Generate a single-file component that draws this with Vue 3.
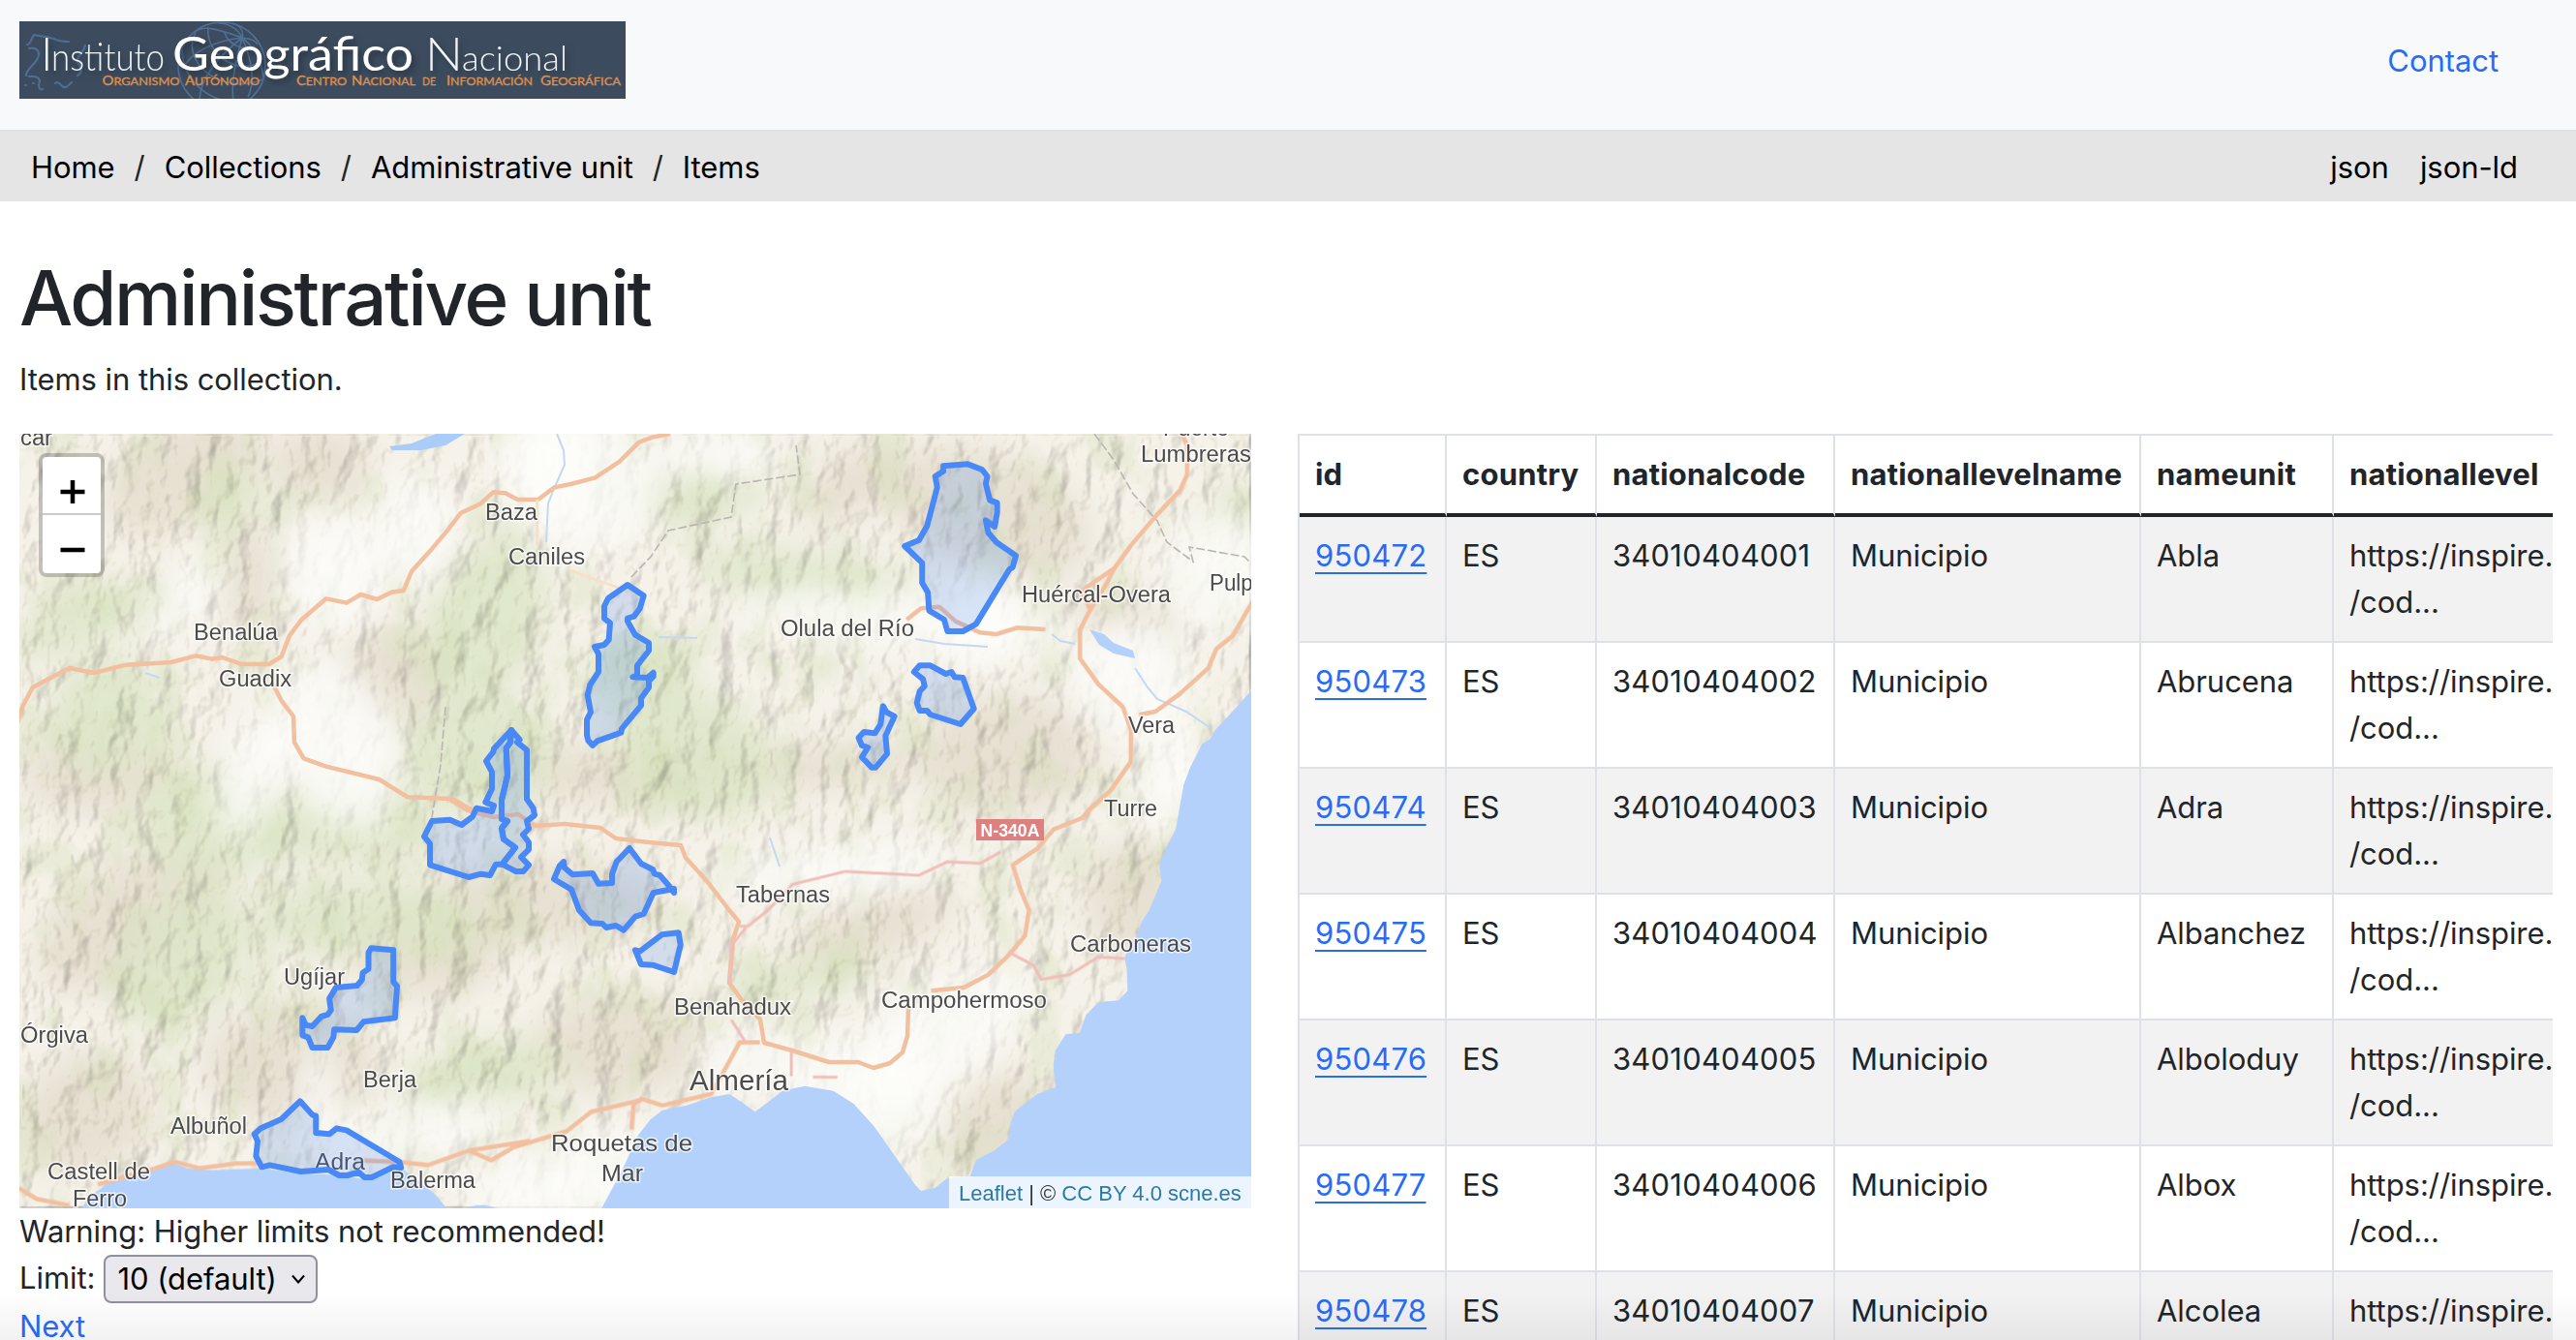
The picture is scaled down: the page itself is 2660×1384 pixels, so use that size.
<script setup>
const crumbs = ['Home', 'Collections', 'Administrative unit', 'Items']
const columns = ['id', 'country', 'nationalcode', 'nationallevelname', 'nameunit', 'nationallevel']
const names = ['Abla', 'Abrucena', 'Adra', 'Albanchez', 'Alboloduy', 'Albox', 'Alcolea']
const rows = names.map((name, i) => ({ id: 950472 + i, code: `3401040400${i + 1}`, name }))

// town labels: text, left edge, baseline, width, font size
const towns = [
  ['car', 21, 460, 33, 23],
  ['Baza', 501, 537, 54, 23],
  ['Caniles', 525, 583, 79, 23],
  ['Benalúa', 200, 661, 87, 23],
  ['Guadix', 226, 709, 75, 23],
  ['Puerto', 1201, 450, 68, 23],
  ['Lumbreras', 1178, 477, 114, 23],
  ['Huércal-Overa', 1055, 622, 154, 23],
  ['Pulpí', 1249, 610, 51, 23],
  ['Olula del Río', 806, 657, 138, 23],
  ['Vera', 1165, 757, 48, 23],
  ['Turre', 1140, 843, 55, 23],
  ['Ugíjar', 293, 1017, 63, 23],
  ['Órgiva', 21, 1077, 70, 23],
  ['Berja', 375, 1123, 55, 23],
  ['Albuñol', 176, 1171, 79, 23],
  ['Adra', 325, 1208, 52, 23],
  ['Castell de', 49, 1218, 106, 23],
  ['Ferro', 75, 1246, 56, 23],
  ['Balerma', 403, 1227, 88, 23],
  ['Roquetas de', 569, 1189, 146, 24],
  ['Mar', 621, 1220, 43, 24],
  ['Tabernas', 760, 932, 97, 23],
  ['Carboneras', 1105, 983, 125, 23],
  ['Benahadux', 696, 1048, 121, 23],
  ['Campohermoso', 910, 1041, 171, 23],
  ['Almería', 712, 1126, 102, 29]
]

// soft terrain patches: cx, cy, rx, ry, rotation
const greens = [
  [110, 740, 60, 60, 0], [90, 640, 90, 26, -20], [210, 850, 70, 60, 20], [500, 640, 60, 90, 20],
  [490, 780, 80, 60, 0], [830, 600, 110, 30, 10], [720, 510, 80, 24, -5], [720, 780, 90, 60, 20],
  [330, 850, 120, 40, 0], [190, 990, 80, 60, -50], [380, 950, 120, 40, 0], [830, 1010, 80, 20, -10],
  [500, 1110, 90, 34, -10], [240, 510, 40, 24, 0], [1110, 885, 24, 12, 0], [1270, 530, 50, 18, -45], [660, 700, 60, 40, 0]
]
const browns = [
  [190, 490, 90, 50, -30], [330, 480, 50, 40, 0], [260, 600, 26, 60, 0], [810, 795, 160, 22, -4],
  [140, 950, 110, 60, -30], [90, 1150, 70, 60, -30], [1020, 530, 110, 60, 20], [1180, 930, 60, 60, -40],
  [1040, 1170, 60, 60, -50], [620, 800, 120, 30, 0], [560, 930, 130, 40, 0], [900, 960, 90, 30, -20],
  [100, 800, 80, 40, 0], [400, 700, 50, 50, 0], [1160, 640, 60, 24, 10], [1040, 780, 90, 60, 0],
  [640, 1080, 90, 50, 0], [300, 1100, 90, 60, 0], [880, 500, 60, 30, -30], [780, 1100, 40, 30, 0], [440, 980, 80, 50, 0]
]
const plains = [
  [345, 590, 50, 60, 0], [350, 770, 60, 90, -20], [260, 800, 30, 70, 20], [600, 500, 80, 70, 20],
  [560, 470, 40, 60, 0], [190, 620, 20, 50, 30], [970, 1070, 100, 50, -35], [900, 1130, 70, 60, 20],
  [860, 900, 120, 24, -5], [1260, 590, 60, 60, 0], [1170, 700, 60, 60, 0], [610, 1220, 130, 50, -10],
  [430, 1170, 100, 24, -10], [940, 640, 180, 26, 5], [780, 1100, 60, 40, 0], [1210, 800, 30, 60, 20],
  [740, 470, 60, 24, 0], [1010, 640, 50, 50, 0], [330, 1140, 20, 60, 0], [430, 550, 40, 60, 0]
]
</script>

<template>
  <div class="page">
    <header class="top">
      <svg class="logo" viewBox="20 22 626 80" width="626" height="80">
        <rect x="20" y="22" width="626" height="80" fill="#3c4c5e" />
        <g fill="none" stroke="#4f7096" stroke-width="1.6">
          <ellipse cx="229" cy="68" rx="45" ry="45" />
          <path d="M250 39C225 30 210 26 203 32M250 39C222 42 196 54 188 72M250 39C228 56 206 80 206 104M250 39C244 62 238 84 241 104M250 39C260 62 264 84 256 100M250 39C262 48 270 62 272 80M250 39C246 30 236 24 226 24M250 39C252 32 248 26 240 24M250 39C260 40 264 42 266 46" />
          <path d="M232 33C234 44 250 54 263 48M215 28C212 56 244 78 270 64M202 34C186 62 226 100 272 82M188 52C188 76 206 98 232 104" />
        </g>
        <g fill="none" stroke="#4d6d92" stroke-width="2.2" stroke-linecap="round">
          <path d="M28 46C32 46 32 40 35 36C44 38 52 38 58 41C63 43 66 43 71 43" />
          <path d="M30 50C38 48 43 54 38 62C33 69 27 72 27 78M30 79C38 78 43 81 40 87C40 92 42 93 44 92M57 86C62 82 63 92 68 90C70 89 72 87 74 85M88 47C86 56 78 58 80 64C84 70 86 74 80 78M34 86L35 86M26 88L27 88" />
        </g>
        <g class="logo-shadow" fill="#fff" font-family="Lato, sans-serif">
          <g font-weight="300" fill="#f0f3f6">
            <text x="42" y="73.3" font-size="48">I</text>
            <text x="53" y="73.3" font-size="39" textLength="117" lengthAdjust="spacingAndGlyphs">nstituto</text>
            <text x="439" y="73.3" font-size="48" textLength="39" lengthAdjust="spacingAndGlyphs">N</text>
            <text x="477" y="73.3" font-size="36" textLength="109" lengthAdjust="spacingAndGlyphs">acional</text>
          </g>
          <text x="178" y="73.3" font-size="49" textLength="249" lengthAdjust="spacingAndGlyphs">Geográfico</text>
        </g>
        <g class="agency">
          <text x="105.500" y="88.300" textLength="80" lengthAdjust="spacingAndGlyphs">O<tspan>RGANISMO</tspan></text>
          <text x="191" y="88.300" textLength="77" lengthAdjust="spacingAndGlyphs">A<tspan>UTÓNOMO</tspan></text>
          <text x="306" y="88.300" textLength="52" lengthAdjust="spacingAndGlyphs">C<tspan>ENTRO</tspan></text>
          <text x="363" y="88.300" textLength="66" lengthAdjust="spacingAndGlyphs">N<tspan>ACIONAL</tspan></text>
          <text x="436" y="88.300" textLength="14" lengthAdjust="spacingAndGlyphs"><tspan>DE</tspan></text>
          <text x="461" y="88.300" textLength="89" lengthAdjust="spacingAndGlyphs">I<tspan>NFORMACIÓN</tspan></text>
          <text x="558" y="88.300" textLength="83" lengthAdjust="spacingAndGlyphs">G<tspan>EOGRÁFICA</tspan></text>
        </g>
      </svg>
      <a class="contact">Contact</a>
    </header>

    <nav class="crumbs">
      <div class="trail">
        <template v-for="(c, i) in crumbs" :key="c">
          <span v-if="i" class="slash">/</span>
          <a>{{ c }}</a>
        </template>
      </div>
      <div class="formats"><a>json</a><a>json-ld</a></div>
    </nav>

    <main>
      <h1>Administrative unit</h1>
      <p class="lead">Items in this collection.</p>

      <div class="cols">
        <section class="left">
          <div class="map">
            <svg viewBox="20 448 1272 800" width="1272" height="800">
              <defs>
                <filter id="soft" x="-50%" y="-50%" width="200%" height="200%"><feGaussianBlur stdDeviation="16" /></filter>
                <filter id="fine" x="-5%" y="-5%" width="110%" height="110%"><feGaussianBlur stdDeviation="0.7" /></filter>
                <filter id="relief" x="0" y="0" width="100%" height="100%" color-interpolation-filters="sRGB">
                  <feTurbulence type="fractalNoise" baseFrequency="0.04 0.022" numOctaves="4" seed="11" result="n" />
                  <feColorMatrix in="n" type="matrix" values="0 0 0 0 0  0 0 0 0 0  0 0 0 0 0  1 0 0 0 0" />
                  <feGaussianBlur stdDeviation="1" />
                  <feDiffuseLighting surfaceScale="8" diffuseConstant="1.18" lighting-color="#fffaf0">
                    <feDistantLight azimuth="215" elevation="60" />
                  </feDiffuseLighting>
                </filter>
                <filter id="mottle" x="0" y="0" width="100%" height="100%" color-interpolation-filters="sRGB">
                  <feTurbulence type="fractalNoise" baseFrequency="0.02 0.014" numOctaves="4" seed="4" />
                  <feColorMatrix type="matrix" values="0 0 0 0 0.80  0 0 0 0 0.86  0 0 0 0 0.68  0 5 0 0 -2.5" />
                </filter>
              </defs>

              <rect x="20" y="448" width="1272" height="800" fill="#f5f2ea" />
              <g filter="url(#soft)">
                <ellipse v-for="(p, i) in browns" :key="i" :cx="p[0]" :cy="p[1]" :rx="p[2]" :ry="p[3]" :transform="`rotate(${p[4]} ${p[0]} ${p[1]})`" fill="#e1dbcb" opacity=".75" />
                <ellipse v-for="(p, i) in greens" :key="i" :cx="p[0]" :cy="p[1]" :rx="p[2]" :ry="p[3]" :transform="`rotate(${p[4]} ${p[0]} ${p[1]})`" fill="#dbe5c6" opacity=".8" />
              </g>
              <rect x="20" y="448" width="1272" height="800" filter="url(#mottle)" opacity=".28" />
              <rect class="shade" x="20" y="448" width="1272" height="800" filter="url(#relief)" opacity=".3" />
              <g filter="url(#soft)">
                <ellipse v-for="(p, i) in plains" :key="i" :cx="p[0]" :cy="p[1]" :rx="p[2]" :ry="p[3]" :transform="`rotate(${p[4]} ${p[0]} ${p[1]})`" fill="#fdfcfa" opacity=".8" />
              </g>

              <!-- sea, reservoirs and rivers -->
              <g fill="#b3d1fb" filter="url(#fine)">
                <path transform="translate(650 840) scale(.42092 .33333)" d="M1545-420L1525-380L1490-330L1435-255L1425-230L1405-215L1375-140L1360-90L1350-20L1340 50L1315 110L1300 160L1305 210L1275 300L1255 340L1245 380L1225 410L1215 450L1220 480L1222 550L1200 580L1150 585L1120 625L1105 680L1070 685L1045 735L1040 780L1045 850L1000 870L945 925L935 960L930 1010L895 1045L850 1075L840 1110L835 1125L780 1130L750 1160L715 1170L700 1150L650 1060L600 970L550 900L500 860L430 845L375 860L340 895L308 925L275 895L245 870L200 880L140 905L80 920L50 950L20 1000L-5 1070L-20 1110L-75 1240L1545 1240Z" />
                <path transform="translate(0 840) scale(.42092 .33333)" d="M195 1240L215 1190L250 1160L270 1130L380 1105L400 1090L430 1085L460 1100L520 1105L640 1100L740 1115L830 1120L900 1135L985 1100L1040 1150L1075 1190L1105 1240ZM1135 1228Q1180 1200 1225 1228Z" />
                <path d="M402 461L425 458L450 448L480 448L460 460L435 465L405 465Z" fill="#a9cdf8" />
                <path d="M1125 650L1140 655L1150 664L1170 672L1172 680L1150 675L1135 666Z" />
              </g>
              <g fill="none" stroke="#c3d8f3" stroke-width="2" filter="url(#fine)">
                <path d="M575 448L582 465L583 480L572 505L566 520L564 560M1086 655L1095 662L1110 665M1172 690L1185 710L1195 722L1225 735L1250 752M795 865L805 895M945 660L975 665L1020 668M165 700L150 695M680 658L720 659" />
              </g>

              <!-- provincial boundary -->
              <g fill="none" stroke="#b9b5b1" stroke-width="1.6" stroke-dasharray="9 3" filter="url(#fine)">
                <path d="M1130 448L1150 475L1170 510L1195 538L1205 560L1232 580L1228 565L1285 575L1292 582M652 596L672 575L690 548L755 534L760 500L826 490L822 460M460 730L455 790L445 850" />
              </g>

              <!-- roads -->
              <g class="roads" filter="url(#fine)">
                <g transform="translate(0 440) scale(.42092 .33333)">
                  <path d="M40 930L55 870L80 810L140 770L170 750L230 765L310 740L420 732L480 712L520 722L545 717L590 737L660 738L690 715L710 650L740 600L800 535L850 548L885 522L925 537L960 515L990 510L1010 450L1060 380L1100 320L1130 270L1180 240L1210 205L1240 208L1270 228L1320 228L1360 190L1400 180L1460 160L1520 110L1568 50L1600 35L1644 24" />
                  <path d="M670 800L690 850L720 900L722 980L745 1030L800 1055L930 1095L1000 1150L1110 1155L1150 1185L1200 1198" />
                  <path class="minor" d="M1318 228V370M1400 448L1480 485L1560 520" />
                </g>
                <path d="M465 826L483 837L510 844L535 841L553 853L583 851L620 855L636 866L670 870L703 873L708 886L730 910L753 940L763 952L757 970L753 1015L766 1033L785 1053L789 1077L818 1085L856 1097L886 1097L902 1103L919 1098L932 1087L937 1070L938 1040" />
                <g transform="translate(650 440) scale(.42092 .33333)">
                  <path d="M1350 10L1368 60L1368 150L1350 200L1290 280L1230 370L1190 440L1110 510L1130 570L1105 630L1105 720L1150 800L1210 870L1230 940L1230 1040L1180 1130L1135 1180L1110 1215L1040 1250L1000 1310L940 1360L960 1440L980 1500L970 1580L930 1640L880 1700L820 1740L740 1750" />
                  <path d="M1190 440L1165 500L1130 570M1530 540L1480 650L1440 690L1420 750L1350 830L1290 885L1250 895M680 600L715 565L760 560L800 605L860 640L900 645L950 625L1020 630" />
                </g>
                <g transform="translate(650 840) scale(.42092 .33333)">
                  <path class="pink" d="M270 350L290 350L340 300L400 220L530 180L710 192L780 150L860 155L910 120M930 430L990 470L1010 515L1080 500L1150 445L1215 450M285 355L250 410L245 530M250 640L285 710M397 738L397 815M450 817L510 818" />
                  <path d="M5 980L10 900L30 885L80 905L200 870L240 780L270 710L320 710" />
                </g>
                <g transform="translate(0 840) scale(.42092 .33333)">
                  <path d="M45 1160L90 1195L170 1215M240 1150L380 1100L430 1080L490 1100L580 1085L640 1085M870 1075L980 1080L1050 1090L1150 1045L1205 1075L1260 1035L1390 985L1450 925L1568 890M1150 1045L1300 1015" />
                </g>
              </g>
              <rect x="1008" y="846" width="70" height="22" fill="#dc8080" />
              <text x="1012.500" y="863.500" class="badge" textLength="61" lengthAdjust="spacingAndGlyphs">N-340A</text>

              <g class="towns">
                <text v-for="t in towns" :key="t[0]" :x="t[1]" :y="t[2]" :font-size="t[4]" :textLength="t[3]" lengthAdjust="spacingAndGlyphs">{{ t[0] }}</text>
              </g>

              <!-- municipalities -->
              <g class="areas">
                <g transform="translate(420 590) scale(.33333)">
                  <path d="M684 42L734 76L722 116L704 140L684 146L684 155L708 197L750 222L750 246L714 292L714 322L700 328L746 330L764 314L764 326L750 340L750 360L726 394L726 416L666 488L664 500L590 526L576 540L562 524L558 508L558 460L570 436L560 384L568 352L594 312L594 256L582 234L612 228L626 212L630 160L612 146L612 108L624 84Z" />
                  <path d="M324 492L270 550L268 560L246 588L264 622L264 674L244 716L270 726L264 744L216 734L204 760L170 786L134 770L78 774L54 822L72 844L72 910L192 948L230 938L258 942L276 908L296 908L336 856L300 830L294 796L312 774L294 768L294 708L312 634L308 548L320 530Z" />
                  <path d="M324 492L350 522L342 530L372 554L372 706L392 734L396 756L372 774L378 798L360 816L378 840L378 862L354 886L378 910L362 930L338 930L296 908L336 856L300 830L294 796L312 774L294 768L294 708L312 634L308 548L322 530Z" />
                  <path d="M486 900L474 912L456 954L510 986L534 1050L570 1090L606 1092L618 1104L648 1098L672 1112L708 1070L734 1062L764 996L828 984L828 996L812 974L784 942L768 938L762 924L726 906L690 858L650 900L636 938V966L594 968L576 936L514 940L488 918Z" />
                  <path d="M708 1174L722 1178L790 1126L842 1120L848 1158L828 1242L762 1220L726 1218Z" />
                </g>
                <g transform="translate(650 440) scale(.42092 .33333)">
                  <path d="M770 124L830 118L865 135L878 156L874 178L884 230L902 238L902 268L896 312L874 292L880 330L900 360L948 402L940 438L932 444L850 614L818 636H780L772 600L735 572L732 516L718 486V424L675 372L710 354L730 310L755 190L750 156L770 140Z" />
                  <path d="M712 742H738L776 768L790 762L798 778L818 780L845 876L812 924L738 894L730 882H712L705 858L712 822L724 806L720 784L698 762Z" />
                  <path d="M622 868L630 886L650 900L628 960L632 1016L604 1058H594L570 1026L585 996L570 990L562 966L575 948L602 952L616 924Z" />
                </g>
                <g transform="translate(0 840) scale(.42092 .33333)">
                  <path d="M910 418L965 424V522L974 536L969 634L892 646L875 672L820 670L818 694L804 726H766L756 694L742 688V634L750 656L766 660L788 630L804 624L812 610L808 574L824 540L876 534L888 516L890 494L904 482V432Z" />
                  <path d="M736 892L766 934L775 938V990L808 994L826 976L850 982L980 1080L984 1098L965 1096L912 1128H894L880 1112L852 1122L832 1122L806 1104L738 1110L662 1090L642 1096L628 1062L632 1016L624 994L640 976L690 948Z" />
                </g>
              </g>
            </svg>
            <div class="zoom">
              <span><svg width="26" height="26" viewBox="0 0 26 26"><path d="M13 1V25M.5 13H25.500" stroke="#000" stroke-width="4.500" /></svg></span>
              <span><svg width="26" height="26" viewBox="0 0 26 26"><path d="M.5 13H25.500" stroke="#000" stroke-width="4.500" /></svg></span>
            </div>
            <div class="credit"><a>Leaflet</a> | © <a>CC BY 4.0 scne.es</a></div>
          </div>
          <div class="line">Warning: Higher limits not recommended!</div>
          <div class="line limit">
            <span>Limit:</span>
            <div class="select">
              <span>10 (default)</span>
              <svg width="14" height="10" viewBox="0 0 14 10"><path d="M1 1.500L7 8.500L13 1.500" fill="none" stroke="#000" stroke-width="2" /></svg>
            </div>
          </div>
          <div class="line"><a>Next</a></div>
        </section>

        <section class="right">
          <table>
            <colgroup><col class="c1" /><col class="c2" /><col class="c3" /><col class="c4" /><col class="c5" /><col class="c6" /></colgroup>
            <thead>
              <tr><th v-for="c in columns" :key="c">{{ c }}</th></tr>
            </thead>
            <tbody>
              <tr v-for="r in rows" :key="r.id">
                <td class="num"><a>{{ r.id }}</a></td>
                <td>ES</td>
                <td class="num">{{ r.code }}</td>
                <td>Municipio</td>
                <td>{{ r.name }}</td>
                <td>https://inspire.ec.europa.eu<br />/cod...</td>
              </tr>
            </tbody>
          </table>
        </section>
      </div>
    </main>
    <div class="fade"></div>
  </div>
</template>

<style>
body {
  margin: 0;
  overflow: hidden;
}
</style>

<style scoped>
* {
  box-sizing: border-box;
}
.page {
  position: relative;
  width: 2660px;
  height: 1384px;
  overflow: hidden;
  background: #fff;
  color: #212529;
  font: 400 31px/48px Inter, sans-serif;
  letter-spacing: -0.06px;
}
a {
  color: #286cf6;
}
.top {
  height: 136px;
  padding: 22px 80px 32px 20px;
  display: flex;
  justify-content: space-between;
  background: #f8f9fb;
  border-bottom: 2px solid #dee2e6;
}
.logo {
  display: block;
}
.logo-shadow {
  letter-spacing: 0;
  filter: drop-shadow(3px 4px 3px rgba(20, 28, 38, 0.5));
}
.agency {
  font: 400 13.5px Lato, sans-serif;
  letter-spacing: 0;
  fill: #e0904a;
  stroke: #e0904a;
  stroke-width: 0.3px;
}
.agency tspan {
  font-size: 11.5px;
}
.contact {
  margin-top: 17px;
}
.crumbs {
  height: 72px;
  padding: 13px 60px 0 32px;
  display: flex;
  justify-content: space-between;
  background: #e5e5e5;
}
.crumbs a {
  color: #000;
}
.trail {
  display: flex;
}
.slash {
  width: 51px;
  text-align: center;
}
.formats {
  display: flex;
  gap: 32px;
}
main {
  padding-left: 20px;
}
h1 {
  margin: 0;
  padding-top: 52px;
  font-size: 78px;
  line-height: 96px;
  font-weight: 500;
  letter-spacing: -2.4px;
}
.lead {
  margin: 12px 0 32px;
}
.cols {
  display: flex;
  gap: 48px;
}
.left {
  width: 1272px;
}
.map {
  position: relative;
  width: 1272px;
  height: 800px;
  overflow: hidden;
}
.map > svg {
  display: block;
}
.shade {
  mix-blend-mode: multiply;
}
.roads path {
  fill: none;
  stroke: #f2bf9f;
  stroke-width: 4.5px;
  stroke-linejoin: round;
  vector-effect: non-scaling-stroke;
}
.roads .pink {
  stroke: #f0bdb8;
  stroke-width: 3px;
}
.roads .minor {
  stroke: #f6e0c8;
  stroke-width: 3px;
}
.badge {
  font: 700 18px "Liberation Sans", sans-serif;
  letter-spacing: 0;
  fill: #fff;
}
.towns {
  font-family: "Liberation Sans", sans-serif;
  letter-spacing: 0;
  fill: #4b4b4b;
  stroke: rgba(255, 255, 255, 0.7);
  stroke-width: 3px;
  paint-order: stroke;
}
.areas path {
  fill: rgba(72, 137, 247, 0.2);
  stroke: #4889f7;
  stroke-width: 6px;
  stroke-linejoin: round;
  vector-effect: non-scaling-stroke;
}
.zoom {
  position: absolute;
  left: 20px;
  top: 20px;
  width: 68px;
  height: 128px;
  border: 4px solid rgba(0, 0, 0, 0.2);
  border-radius: 8px;
  background: #fff;
  background-clip: padding-box;
}
.zoom span {
  height: 59px;
  display: flex;
  align-items: center;
  justify-content: center;
  padding: 14px 0 0 2px;
}
.zoom span:first-child {
  height: 60px;
  border-bottom: 2px solid #ccc;
}
.zoom span:last-child {
  padding-top: 12px;
}
.credit {
  position: absolute;
  right: 0;
  bottom: 0;
  width: 312px;
  height: 33px;
  padding-left: 10px;
  background: rgba(255, 255, 255, 0.75);
  font: 22px/36px "Liberation Sans", sans-serif;
  letter-spacing: 0;
  white-space: nowrap;
  color: #333;
}
.credit a {
  color: #2a7aa9;
}
.limit {
  display: flex;
  gap: 9px;
  height: 50px;
}
.select {
  width: 221px;
  height: 50px;
  padding: 0 11px 0 12px;
  display: flex;
  align-items: center;
  justify-content: space-between;
  border: 2px solid #8f8f9d;
  border-radius: 8px;
  background: #e9e9ed;
  color: #000;
}
.right {
  width: 1296px;
  height: 936px;
  overflow: hidden;
}
table {
  table-layout: fixed;
  width: 1500px;
  border-spacing: 0;
  border-left: 2px solid #dee2e6;
}
.c1 { width: 152px; }
.c2 { width: 155px; }
.c3 { width: 246px; }
.c4 { width: 316px; }
.c5 { width: 199px; }
th,
td {
  padding: 16px;
  text-align: left;
  vertical-align: top;
  white-space: nowrap;
  border-right: 2px solid #dee2e6;
  border-bottom: 2px solid #dee2e6;
}
th {
  height: 86px;
  padding-right: 0;
  border-top: 2px solid #dee2e6;
  border-bottom: 4px solid #212529;
  font-weight: 700;
  letter-spacing: 0.2px;
}
td {
  height: 130px;
}
.num {
  letter-spacing: 0.2px;
}
tbody tr:nth-child(odd) td {
  background: #f2f2f2;
}
td a {
  text-decoration: underline;
  text-decoration-thickness: 2px;
  text-underline-offset: 6px;
}
.fade {
  position: absolute;
  left: 0;
  right: 0;
  bottom: 0;
  height: 50px;
  background: linear-gradient(rgba(0, 0, 0, 0), rgba(0, 0, 0, 0.05));
  pointer-events: none;
}
</style>
